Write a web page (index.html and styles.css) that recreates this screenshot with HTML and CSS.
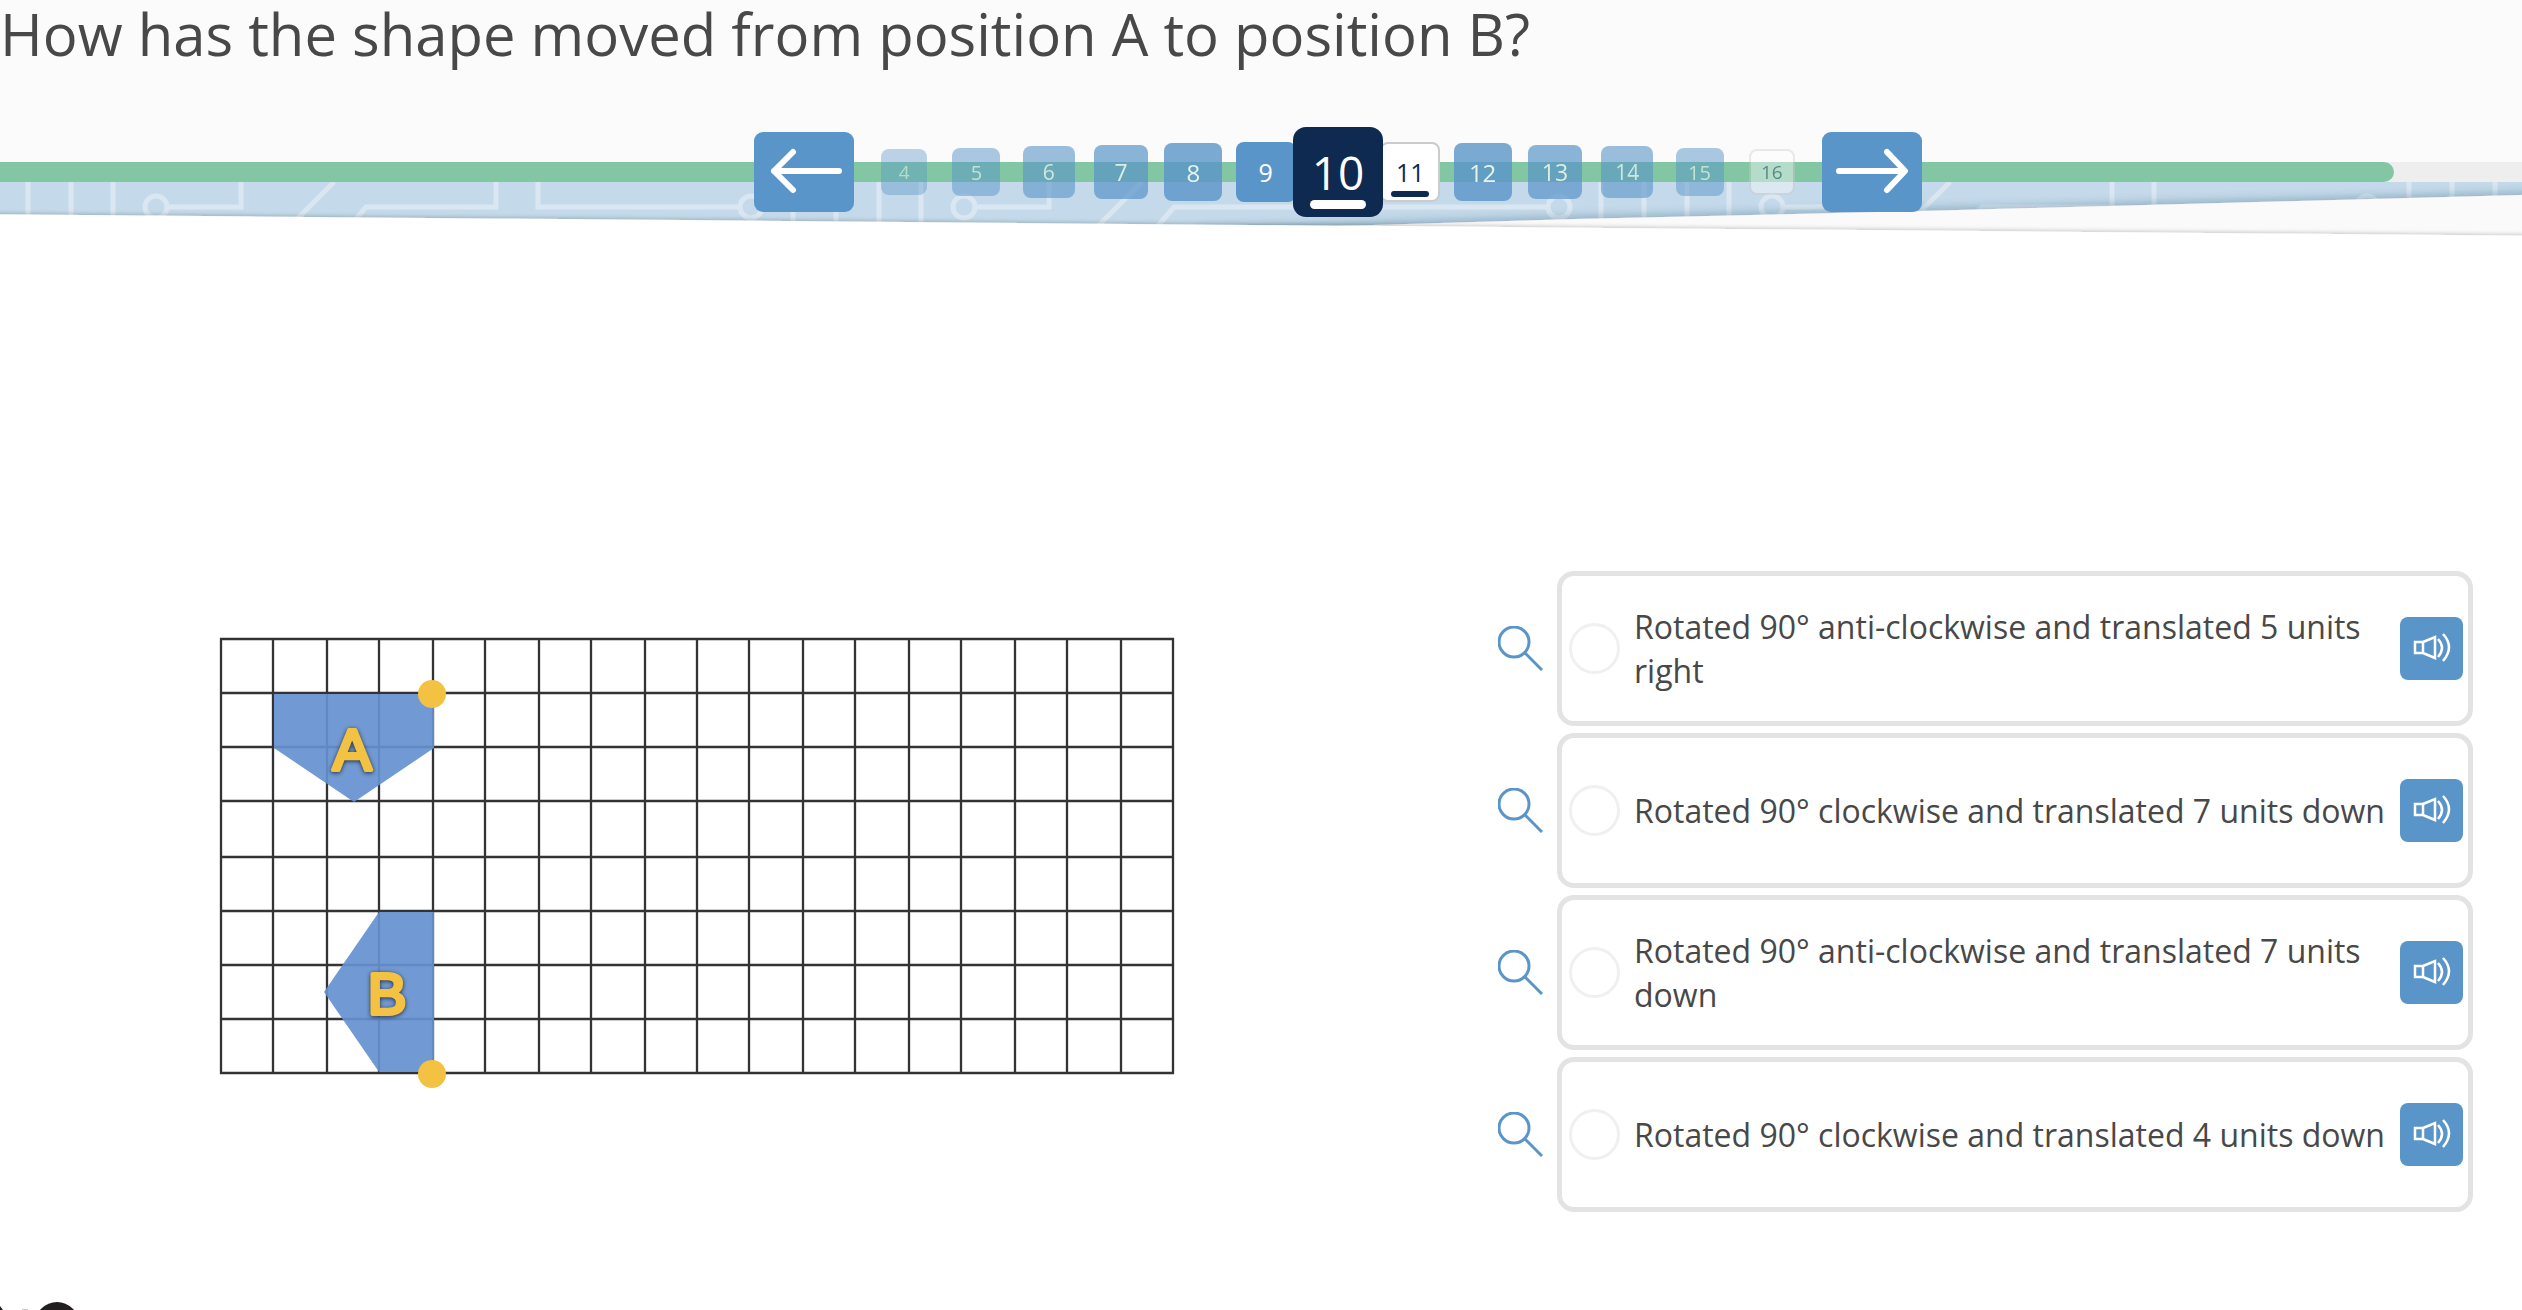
FILE: index.html
```html
<!DOCTYPE html>
<html lang="en">
<head>
<meta charset="utf-8">
<title>Question 10</title>
<link rel="stylesheet" href="styles.css">
</head>
<body>
<svg class="sprite" aria-hidden="true">
  <symbol id="magnifier" viewBox="0 0 45 45"><circle cx="16" cy="16" r="15"/><path d="M27 27L44 44"/></symbol>
  <symbol id="speaker" viewBox="0 0 38 32"><path d="M2 11h8v11H2zM10 11L22 6v21L10 22M25 8q8 9 0 18M30 3q12 13 0 27"/></symbol>
</svg>

<header class="header">
  <h1 class="question">How has the shape moved from position A to position B?</h1>
  <div class="stage">
    <svg class="band" viewBox="0 0 2522 60" preserveAspectRatio="none" aria-hidden="true">
      <defs>
        <pattern id="circuit" width="808" height="60" patternUnits="userSpaceOnUse">
          <rect width="808" height="60" fill="#c4daea"/>
          <g fill="none" stroke="#dae7f2" stroke-width="5">
            <path d="M28 0V60M71 0V60M113 0V60M793 0V60M168 25H241V0M334 0L274 60M336 60L366 25H496V0M538 0V25H739"/>
            <circle cx="156" cy="25" r="11"/>
            <circle cx="751" cy="25" r="11"/>
          </g>
        </pattern>
        <filter id="shade" x="-5%" y="-80%" width="110%" height="260%"><feDropShadow dx="0" dy="-2" stdDeviation="5" flood-color="#23405c" flood-opacity=".32"/></filter>
        <filter id="shade-soft" x="-5%" y="-80%" width="110%" height="260%"><feDropShadow dx="0" dy="-1" stdDeviation="2" flood-color="#000" flood-opacity=".22"/></filter>
      </defs>
      <rect width="2522" height="60" fill="url(#circuit)"/>
      <path d="M1200 48L1575 37L1920 29L2560 12V70H1200z" fill="#fafafa" filter="url(#shade)"/>
      <path d="M-40 32L2560 54V90H-40z" fill="#fff" filter="url(#shade-soft)"/>
    </svg>
    <progress class="progress" max="2522" value="2394" aria-label="Progress"></progress>
    <nav class="pager" aria-label="Questions">
      <button class="arrow" type="button" aria-label="Previous">
        <svg width="100" height="80" viewBox="0 0 100 80"><path d="M85 39H20M39 20L20 39L39 58"/></svg>
      </button>
      <div class="steps">
        <button class="step d6" type="button">4</button>
        <button class="step d5" type="button">5</button>
        <button class="step d4" type="button">6</button>
        <button class="step d3" type="button">7</button>
        <button class="step d2" type="button">8</button>
        <button class="step d1" type="button">9</button>
        <button class="step current" type="button" aria-current="step">10</button>
        <button class="step d1 todo marked" type="button">11</button>
        <button class="step d2" type="button">12</button>
        <button class="step d3" type="button">13</button>
        <button class="step d4" type="button">14</button>
        <button class="step d5" type="button">15</button>
        <button class="step d6 todo" type="button">16</button>
      </div>
      <button class="arrow" type="button" aria-label="Next">
        <svg width="100" height="80" viewBox="0 0 100 80"><path d="M17 39H82M65 20L83 39L65 58"/></svg>
      </button>
    </nav>
  </div>
</header>

<main class="main">
  <svg class="figure" viewBox="220 637 954 452" role="img" aria-label="Shape A and shape B on a grid">
    <path class="grid-lines" d="M221 638V1074M273 638V1074M327 638V1074M379 638V1074M433 638V1074M485 638V1074M539 638V1074M591 638V1074M645 638V1074M697 638V1074M749 638V1074M803 638V1074M855 638V1074M909 638V1074M961 638V1074M1015 638V1074M1067 638V1074M1121 638V1074M1173 638V1074M220 639H1174M220 693H1174M220 747H1174M220 801H1174M220 857H1174M220 911H1174M220 965H1174M220 1019H1174M220 1073H1174"/>
    <path class="shape" d="M274 694H434V748L354 802L274 748z"/>
    <path class="shape" d="M379 912H434V1072H379L324 992z"/>
    <circle class="dot" cx="432" cy="694" r="14"/>
    <circle class="dot" cx="432" cy="1074" r="14"/>
    <text class="letter" x="352" y="770" text-anchor="middle">A</text>
    <text class="letter" x="387" y="1014" text-anchor="middle">B</text>
  </svg>

  <form class="options">
    <div class="option">
      <button class="zoom" type="button" aria-label="Enlarge answer"><svg width="45" height="45"><use href="#magnifier"/></svg></button>
      <div class="card">
        <label class="answer"><input class="radio" type="radio" name="answer"><span>Rotated 90° anti-clockwise and translated 5 units right</span></label>
        <button class="listen" type="button" aria-label="Listen"><svg width="38" height="32"><use href="#speaker"/></svg></button>
      </div>
    </div>
    <div class="option">
      <button class="zoom" type="button" aria-label="Enlarge answer"><svg width="45" height="45"><use href="#magnifier"/></svg></button>
      <div class="card">
        <label class="answer"><input class="radio" type="radio" name="answer"><span>Rotated 90° clockwise and translated 7 units down</span></label>
        <button class="listen" type="button" aria-label="Listen"><svg width="38" height="32"><use href="#speaker"/></svg></button>
      </div>
    </div>
    <div class="option">
      <button class="zoom" type="button" aria-label="Enlarge answer"><svg width="45" height="45"><use href="#magnifier"/></svg></button>
      <div class="card">
        <label class="answer"><input class="radio" type="radio" name="answer"><span>Rotated 90° anti-clockwise and translated 7 units down</span></label>
        <button class="listen" type="button" aria-label="Listen"><svg width="38" height="32"><use href="#speaker"/></svg></button>
      </div>
    </div>
    <div class="option">
      <button class="zoom" type="button" aria-label="Enlarge answer"><svg width="45" height="45"><use href="#magnifier"/></svg></button>
      <div class="card">
        <label class="answer"><input class="radio" type="radio" name="answer"><span>Rotated 90° clockwise and translated 4 units down</span></label>
        <button class="listen" type="button" aria-label="Listen"><svg width="38" height="32"><use href="#speaker"/></svg></button>
      </div>
    </div>
  </form>
</main>

<footer class="footer">
  <svg width="80" height="8" viewBox="0 0 80 8" aria-hidden="true">
    <circle cx="57" cy="22" r="22" fill="#231f20"/>
    <path d="M0 4L3 8H0z" fill="#231f20"/>
    <path d="M22 7H28V8H22z" fill="#ccc"/>
  </svg>
</footer>
</body>
</html>
```
FILE: styles.css
```css
* { box-sizing: border-box; }

body {
  margin: 0;
  min-height: 100vh;
  display: flex;
  flex-direction: column;
  background: #fff;
  color: #484848;
  font-family: "Open Sans", "Noto Sans", sans-serif;
}

button {
  padding: 0;
  border: 0;
  background: none;
  font-family: inherit;
  cursor: pointer;
}

svg { display: block; }

.sprite { position: absolute; width: 0; height: 0; }

/* Header */
.header { background: linear-gradient(#fbfbfb 182px, #fff 182px); }

.question {
  margin: 0;
  padding-bottom: 59px;
  font-size: 58px;
  line-height: 68px;
  font-weight: 400;
}

.stage {
  display: grid;
  grid-template-rows: 90px;
  align-items: center;
}
.stage > * { grid-area: 1 / 1; }

.band {
  width: 100%;
  height: 60px;
  align-self: start;
  margin-top: 55px;
}

.progress {
  appearance: none;
  width: 100%;
  height: 20px;
  border: 0;
  background: #eee;
}
.progress::-webkit-progress-bar { background: #eee; }
.progress::-webkit-progress-value {
  background: #82c6a3;
  border-radius: 0 10px 10px 0;
}

.pager {
  display: flex;
  align-items: center;
  justify-content: center;
  gap: 14px;
  padding-left: 154px;
}

.arrow {
  width: 100px;
  height: 80px;
  border-radius: 9px;
  background: #5a95c9;
}
.arrow path {
  fill: none;
  stroke: #fff;
  stroke-width: 6;
  stroke-linecap: round;
  stroke-linejoin: round;
}

.steps {
  display: grid;
  grid-template-columns: repeat(13, minmax(0, 1fr));
  width: 940px;
  place-items: center;
}

.step {
  display: grid;
  place-items: center;
  border-radius: 8px;
  background: #5a95c9;
  color: #fff;
}
.d1 { width: 60px; height: 60px; font-size: 25px; }
.d2 { width: 58px; height: 58px; font-size: 24px; opacity: .8; }
.d3 { width: 54px; height: 54px; font-size: 23px; opacity: .7; }
.d4 { width: 52px; height: 52px; font-size: 21px; opacity: .6; }
.d5 { width: 48px; height: 48px; font-size: 20px; opacity: .5; }
.d6 { width: 46px; height: 46px; font-size: 19px; opacity: .4; }

.todo {
  border: 2px solid #ccc;
  background: #fff;
  color: #0f2a50;
}

.marked, .current { position: relative; }
.marked::after, .current::after {
  content: "";
  position: absolute;
  bottom: 3px;
  width: 38px;
  height: 6px;
  border-radius: 3px;
  background: #0f2a50;
}

.current {
  z-index: 1;
  width: 90px;
  height: 90px;
  border-radius: 13px;
  background: #0f2a50;
  font-size: 46px;
}
.current::after {
  bottom: 8px;
  width: 56px;
  height: 9px;
  border-radius: 5px;
  background: #fff;
}

/* Question body */
.main {
  flex: 1;
  display: grid;
  grid-template-columns: minmax(0, 954fr) minmax(0, 975fr);
  gap: 324px;
  align-items: start;
  padding: 354px 49px 0 220px;
}

.figure {
  width: 100%;
  margin-top: 66px;
  overflow: visible;
}
.grid-lines { stroke: #333; stroke-width: 2.3; }
.shape { fill: #6590cf; fill-opacity: .92; }
.dot { fill: #f4c242; }
.letter {
  font: 58px "Liberation Sans", Arial, sans-serif;
  fill: #f4c242;
  stroke: #f4c242;
  stroke-width: 4;
  stroke-linejoin: round;
  filter: drop-shadow(0 1px 2px rgba(0, 0, 0, .7));
}

.options {
  display: grid;
  gap: 7px;
}

.option {
  display: flex;
  align-items: center;
  gap: 14px;
}

.zoom svg {
  fill: none;
  stroke: #5a95c9;
  stroke-width: 3;
  overflow: visible;
}

.card {
  flex: 1;
  display: flex;
  align-items: center;
  min-height: 155px;
  padding: 0 5px 0 7px;
  border: 5px solid #e3e3e3;
  border-radius: 17px;
}

.answer {
  flex: 1;
  display: flex;
  align-items: center;
  gap: 14px;
  font-size: 32px;
  line-height: 44px;
}

.radio {
  appearance: none;
  flex: none;
  width: 51px;
  height: 51px;
  margin: 0;
  border: 3px solid #f0f0f0;
  border-radius: 50%;
  background: #fff;
}

.listen {
  flex: none;
  display: grid;
  place-items: center;
  width: 63px;
  height: 63px;
  padding-bottom: 4px;
  border-radius: 8px;
  background: #5a95c9;
}
.listen svg {
  fill: none;
  stroke: #fff;
  stroke-width: 2.5;
}

.footer { height: 8px; }
```
